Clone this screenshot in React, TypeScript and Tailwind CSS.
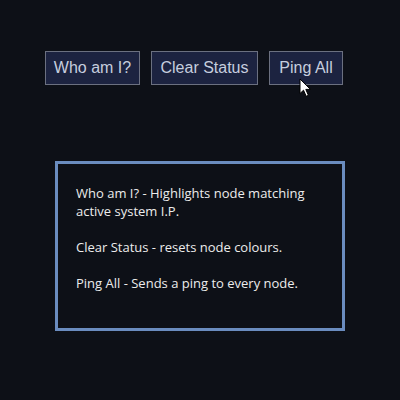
import React from "react";

export default function App() {
  const btn =
    "h-[34px] border border-[#6b7080] bg-[#1c2340] text-[#c6cedf] text-[16px] flex items-center justify-center";
  return (
    <div className="w-[400px] h-[400px] bg-[#0d1017] relative overflow-hidden" style={{ fontFamily: '"Liberation Sans", Arial, sans-serif' }}>
      <div className="flex gap-[11px] pl-[45px] pt-[51px]">
        <button className={`${btn} w-[95px]`}>Who am I?</button>
        <button className={`${btn} w-[107px]`}>Clear Status</button>
        <button className={`${btn} w-[74px]`}>Ping All</button>
      </div>
      <div
        className="ml-[55px] mt-[76px] w-[290px] h-[170px] border-[3px] border-[#6a8cbf] pl-[18px] pr-[10px] pt-[20px] text-[13px] leading-[18px] text-[#ececec]"
        style={{ fontFamily: '"Open Sans", "Noto Sans", sans-serif' }}
      >
        <p>Who am I? - Highlights node matching<br />active system I.P.</p>
        <p className="mt-[18px]">Clear Status - resets node colours.</p>
        <p className="mt-[18px]">Ping All - Sends a ping to every node.</p>
      </div>
      <svg className="absolute left-[299px] top-[78px]" width="13" height="20" viewBox="0 0 13 20">
        <path d="M1 1 L1 15.5 L4.5 12.2 L7.2 18.3 L9.4 17.3 L6.8 11.4 L11.5 11.4 Z" fill="#fff" stroke="#000" strokeWidth="1" />
      </svg>
    </div>
  );
}
